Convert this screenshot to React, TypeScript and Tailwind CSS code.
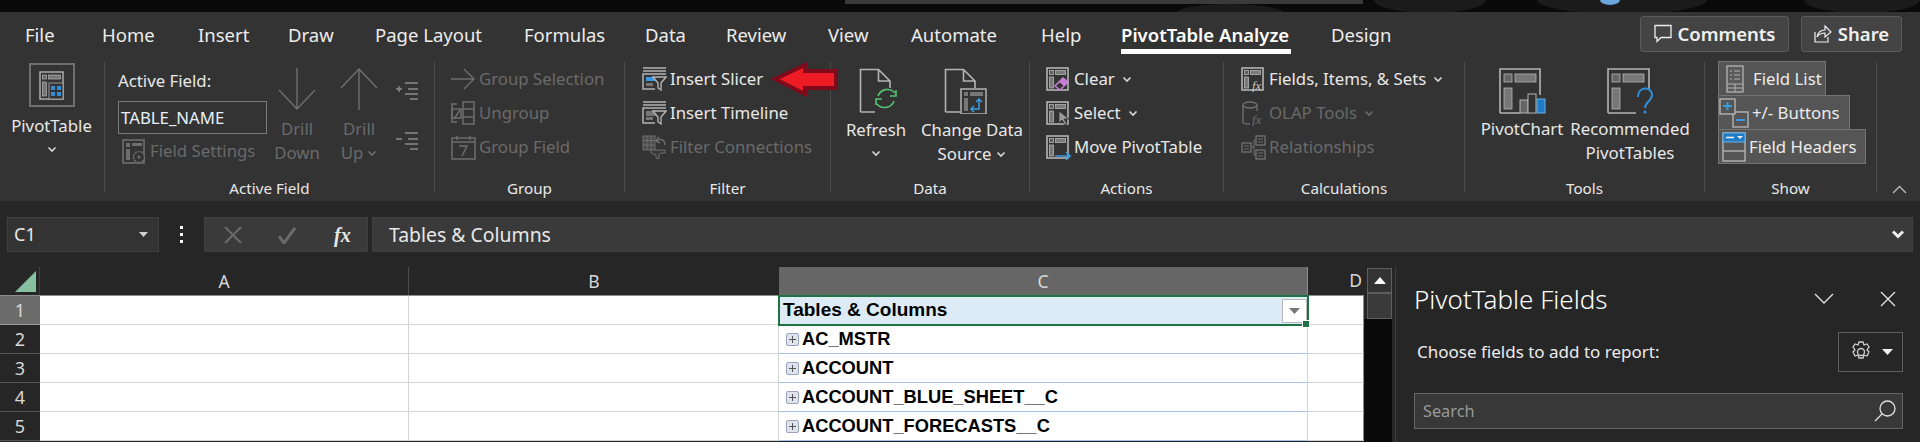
import type { ReactNode } from "react";

const LINE = "#b4b4b4";
const DIM = "#6e6e6e";

const TABS = [
  { label: "File", cls: "w-[77px]" },
  { label: "Home", cls: "w-[96px]" },
  { label: "Insert", cls: "w-[90px]" },
  { label: "Draw", cls: "w-[87px]" },
  { label: "Page Layout", cls: "w-[149px]" },
  { label: "Formulas", cls: "w-[121px]" },
  { label: "Data", cls: "w-[81px]" },
  { label: "Review", cls: "w-[102px]" },
  { label: "View", cls: "w-[83px]" },
  { label: "Automate", cls: "w-[130px]" },
  { label: "Help", cls: "w-[80px]" },
];

const ROWS = ["AC_MSTR", "ACCOUNT", "ACCOUNT_BLUE_SHEET__C", "ACCOUNT_FORECASTS__C"];

function Chevron({ color = "#d8d8d8" }: { color?: string }) {
  return (
    <svg width="10" height="7" viewBox="0 0 10 7" className="inline-block">
      <path d="M1.5 1.5 5 5l3.5-3.5" fill="none" stroke={color} strokeWidth="1.6" />
    </svg>
  );
}

// the little "layout" glyph most of the PivotTable buttons share
function LayoutGlyph({ color = LINE, children }: { color?: string; children?: ReactNode }) {
  return (
    <svg width="25" height="25" viewBox="0 0 25 25" className="shrink-0">
      <rect x="1" y="1" width="21" height="22" fill="none" stroke={color} strokeWidth="1.6" />
      <rect x="3.5" y="3.5" width="4" height="4" fill="#5e5e5e" stroke={color} strokeWidth="0.8" />
      <rect x="9.5" y="3.5" width="10" height="4" fill="#7a7a7a" stroke={color} strokeWidth="0.8" />
      <rect x="3.5" y="10" width="4" height="11" fill="#7a7a7a" stroke={color} strokeWidth="0.8" />
      {children}
    </svg>
  );
}

function FunnelGlyph({ accent }: { accent?: boolean }) {
  return (
    <svg width="25" height="25" viewBox="0 0 25 25" className="shrink-0">
      <path d="M1 1h23M1 4h23" stroke={LINE} strokeWidth="1.5" />
      <path d="M13 22H1V7h23" fill="none" stroke={LINE} strokeWidth="1.5" />
      <rect x="4" y="10" width="10" height={accent ? 4 : 5} fill={accent ? "#3b9ae1" : "#777"} />
      <rect x="4" y="16" width="7" height="3" fill="#777" />
      <path d="M11 10h13l-5 6v7l-3-2v-5z" fill="#333" stroke={LINE} strokeWidth="1.4" />
    </svg>
  );
}

function FilterConnGlyph() {
  return (
    <svg width="25" height="25" viewBox="0 0 25 25" className="shrink-0">
      <rect x="1" y="1" width="12" height="14" fill="#4b4b4b" stroke={DIM} />
      <path d="M5 1v14M9 1v14M1 5.5h12M1 10h12" stroke={DIM} />
      <path d="M14 7c4-5 9-2 9 3" fill="none" stroke={DIM} strokeWidth="1.4" />
      <path d="M17 2l-3 4 4 2" fill="none" stroke={DIM} strokeWidth="1.4" />
      <path d="M9 15h14v3h-4l-2 2v4l-3-1v-3l-5-2z" fill="#3a3a3a" stroke={DIM} />
    </svg>
  );
}

function RibbonRow({
  icon,
  children,
  dim,
}: {
  icon: ReactNode;
  children: ReactNode;
  dim?: boolean;
}) {
  return (
    <div className={`h-[34px] flex items-center gap-[3px] whitespace-nowrap ${dim ? "text-[#6a6a6a]" : "text-[#e8e8e8]"}`}>
      {icon}
      <span>{children}</span>
    </div>
  );
}

function Group({
  label,
  cls,
  children,
}: {
  label?: string;
  cls: string;
  children: ReactNode;
}) {
  return (
    <div className={`${cls} h-[131px] shrink-0 flex flex-col border-r border-[#4b4b4b]`}>
      <div className="flex-1 min-h-0">{children}</div>
      {label && <div className="h-[10px] leading-[10px] text-center text-[15.2px] text-[#e8e8e8]">{label}</div>}
    </div>
  );
}

function DocGlyph({ children }: { children?: ReactNode }) {
  return (
    <svg width="44" height="46" viewBox="0 0 44 46">
      <path d="M1.5 44V1.5h18L31 13v7M19.5 1.5V13H31M1.5 44H16" fill="none" stroke={LINE} strokeWidth="1.6" />
      {children}
    </svg>
  );
}

function ShowButton({ cls, icon, label }: { cls: string; icon: ReactNode; label: string }) {
  return (
    <div className={`${cls} h-[35px] -mb-px flex items-center bg-[#555555] border border-[#737373] whitespace-nowrap text-[#ececec]`}>
      {icon}
      <span>{label}</span>
    </div>
  );
}

function Ribbon() {
  return (
    <div className="h-[189px] bg-[#333333] shrink-0">
      <div className="h-[50px] flex items-start pl-[25px] text-[18.5px] text-[#ececec]">
        {TABS.map((t) => (
          <div key={t.label} className={`${t.cls} h-[42px] pt-[9px] border-b-[5px] border-transparent leading-[28px] whitespace-nowrap`}>
            {t.label}
          </div>
        ))}
        <div className="w-[170px] mr-[40px] h-[42px] pt-[9px] border-b-[5px] border-white leading-[28px] font-semibold text-white whitespace-nowrap">
          PivotTable Analyze
        </div>
        <div className="h-[42px] pt-[9px] leading-[28px] whitespace-nowrap">Design</div>
        <div className="ml-auto mr-[18px] mt-[4px] flex gap-[12px] font-semibold text-[#f0f0f0]">
          <div className="w-[149px] h-[36px] bg-[#444444] border border-[#5a5a5a] rounded-[3px] flex items-center justify-center gap-[6px]">
            <svg width="18" height="20" viewBox="0 0 18 20">
              <path d="M1 1.5h16v12H7l-4 4v-4H1z" fill="none" stroke="#eee" strokeWidth="1.3" />
            </svg>
            Comments
          </div>
          <div className="w-[101px] h-[36px] bg-[#444444] border border-[#5a5a5a] rounded-[3px] flex items-center justify-center gap-[6px]">
            <svg width="18" height="20" viewBox="0 0 18 20">
              <path d="M1 8v10h13v-5M3 13c1-5 4-7 8-7V2l6 6-6 5V9c-3 0-6 1-8 4z" fill="none" stroke="#eee" strokeWidth="1.2" />
            </svg>
            Share
          </div>
        </div>
      </div>

      <div className="flex text-[16.8px] leading-[24px] relative">
        {/* PivotTable */}
        <Group cls="w-[105px]">
          <div className="flex flex-col items-center pt-[1px] pr-[1px]">
            <div className="w-[46px] h-[44px] border-2 border-[#6e6e6e] flex items-center justify-center">
              <svg width="25" height="29" viewBox="0 0 25 29">
                <rect x="1" y="1" width="23" height="27" fill="none" stroke={LINE} strokeWidth="1.4" />
                <rect x="3.5" y="4" width="4" height="4" fill="#666" stroke={LINE} strokeWidth="0.7" />
                <rect x="9.5" y="4" width="12" height="4" fill="#777" stroke={LINE} strokeWidth="0.7" />
                <rect x="3.5" y="11" width="4" height="14" fill="#777" stroke={LINE} strokeWidth="0.7" />
                <rect x="10" y="12" width="14" height="16" fill="#333" stroke={LINE} strokeWidth="0.8" />
                <rect x="12" y="15" width="4" height="4" fill="#2f8fd8" />
                <rect x="18" y="15" width="4" height="4" fill="#2f8fd8" />
                <rect x="12" y="21" width="4" height="4" fill="#2f8fd8" />
                <rect x="18" y="21" width="4" height="4" fill="#2f8fd8" />
              </svg>
            </div>
            <div className="mt-[7px] text-[#e8e8e8]">PivotTable</div>
            <div className="mt-[-2px]"><Chevron /></div>
          </div>
        </Group>

        {/* Active Field */}
        <Group cls="w-[330px]" label="Active Field">
          <div className="flex">
            <div className="w-[162px] pl-[13px] shrink-0">
              <div className="h-[39px] pb-[2px] flex items-center text-[#e8e8e8]">Active Field:</div>
              <div className="h-[33px] border border-[#7a7a7a] pl-[2px] flex items-center text-[#e8f0f8]">TABLE_NAME</div>
              <div className="h-[42px] pl-[4px]">
                <RibbonRow dim icon={
                  <svg width="25" height="25" viewBox="0 0 25 25" className="shrink-0">
                    <rect x="1" y="1" width="21" height="23" fill="none" stroke={DIM} strokeWidth="1.6" />
                    <rect x="4" y="4" width="4" height="4" fill={DIM} />
                    <rect x="10" y="4" width="10" height="3" fill={DIM} />
                    <rect x="4" y="10" width="4" height="11" fill={DIM} />
                    <circle cx="17" cy="18" r="5.5" fill="#333" stroke={DIM} strokeWidth="1.6" strokeDasharray="2 1" />
                    <circle cx="17" cy="18" r="1.6" fill={DIM} />
                  </svg>
                }>Field Settings</RibbonRow>
              </div>
            </div>
            <div className="w-[60px] shrink-0 flex flex-col items-center pt-[6px] text-[#6a6a6a]">
              <svg width="40" height="42" viewBox="0 0 40 42">
                <path d="M20 0v41M2 22l18 19 18-19" fill="none" stroke={DIM} strokeWidth="1.4" />
              </svg>
              <div className="mt-[7px]">Drill</div>
              <div>Down</div>
            </div>
            <div className="w-[64px] shrink-0 flex flex-col items-center pt-[6px] text-[#6a6a6a]">
              <svg width="40" height="42" viewBox="0 0 40 42">
                <path d="M20 42V1M2 20 20 1l18 19" fill="none" stroke={DIM} strokeWidth="1.4" />
              </svg>
              <div className="mt-[7px]">Drill</div>
              <div className="flex items-center gap-[4px]">Up <Chevron color={DIM} /></div>
            </div>
            <div className="ml-[5px] flex flex-col pt-[20px] gap-[32px]">
              <svg width="22" height="18" viewBox="0 0 22 18">
                <path d="M0 7h6M3 4v6M9 1h13M12 7h10M9 12h13M14 17h8" stroke="#8a8a8a" strokeWidth="1.4" />
              </svg>
              <svg width="22" height="18" viewBox="0 0 22 18">
                <path d="M0 7h6M9 1h13M12 7h10M9 12h13M14 17h8" stroke="#8a8a8a" strokeWidth="1.4" />
              </svg>
            </div>
          </div>
        </Group>

        {/* Group */}
        <Group cls="w-[190px]" label="Group">
          <div className="pl-[16px]">
            <RibbonRow dim icon={
              <svg width="25" height="22" viewBox="0 0 25 22" className="shrink-0">
                <path d="M0 11h23M13 1l10 10-10 10" fill="none" stroke={DIM} strokeWidth="1.4" />
              </svg>
            }>Group Selection</RibbonRow>
            <RibbonRow dim icon={
              <svg width="25" height="25" viewBox="0 0 25 25" className="shrink-0">
                <path d="M6 3H1v18h5M3 18l6-9" fill="none" stroke={DIM} strokeWidth="1.5" />
                <rect x="1" y="8" width="9" height="9" fill="none" stroke={DIM} strokeWidth="1.5" />
                <rect x="12" y="1" width="11" height="22" fill="none" stroke={DIM} strokeWidth="1.5" />
                <path d="M12 8h11M12 16h11" stroke={DIM} strokeWidth="1.5" />
              </svg>
            }>Ungroup</RibbonRow>
            <RibbonRow dim icon={
              <svg width="25" height="25" viewBox="0 0 25 25" className="shrink-0">
                <rect x="1" y="3" width="23" height="21" fill="none" stroke={DIM} strokeWidth="1.5" />
                <path d="M1 7h23M6 1v4M19 1v4" stroke={DIM} strokeWidth="1.5" />
                <path d="M8 11h8l-5 10" fill="none" stroke={DIM} strokeWidth="1.5" />
              </svg>
            }>Group Field</RibbonRow>
          </div>
        </Group>

        {/* Filter */}
        <Group cls="w-[206px]" label="Filter">
          <div className="pl-[17px]">
            <RibbonRow icon={<FunnelGlyph accent />}>Insert Slicer</RibbonRow>
            <RibbonRow icon={<FunnelGlyph />}>Insert Timeline</RibbonRow>
            <RibbonRow dim icon={<FilterConnGlyph />}>Filter Connections</RibbonRow>
          </div>
        </Group>

        {/* Data */}
        <Group cls="w-[199px]" label="Data">
          <div className="flex text-[#e8e8e8]">
            <div className="w-[90px] flex flex-col items-center pt-[6px]">
              <div className="pl-[10px]">
                <DocGlyph>
                  <path d="M36 25a10 10 0 0 0-17 3M18 36a10 10 0 0 0 17-3" fill="none" stroke="#55c271" strokeWidth="1.6" />
                  <path d="M31 28h6v-6M23 31h-6v6" fill="none" stroke="#55c271" strokeWidth="1.6" />
                </DocGlyph>
              </div>
              <div className="mt-[4px]">Refresh</div>
              <div className="mt-[-2px]"><Chevron /></div>
            </div>
            <div className="w-[102px] flex flex-col items-center pt-[6px] whitespace-nowrap">
              <div className="pr-[12px]">
                <DocGlyph>
                  <rect x="17" y="21" width="25" height="25" fill="#333" stroke={LINE} strokeWidth="1.5" />
                  <rect x="20" y="24" width="4" height="4" fill="#777" />
                  <rect x="26" y="24" width="13" height="4" fill="#777" />
                  <rect x="20" y="30" width="4" height="13" fill="#777" />
                  <path d="M28 41h7v-10M32 34l3-3 3 3M30 38l-3 3 3 3" fill="none" stroke="#3d9ae0" strokeWidth="1.5" />
                </DocGlyph>
              </div>
              <div className="mt-[4px]">Change Data</div>
              <div className="flex items-center gap-[5px]">Source <Chevron /></div>
            </div>
          </div>
        </Group>

        {/* Actions */}
        <Group cls="w-[194px]" label="Actions">
          <div className="pl-[16px]">
            <RibbonRow icon={
              <LayoutGlyph>
                <path d="M9 19l8-8 5 4-8 8z" fill="#333" stroke="#c77fd6" strokeWidth="1.5" />
                <path d="M13 15l4-4 5 4-4 4z" fill="#c77fd6" />
              </LayoutGlyph>
            }>
              <span className="inline-flex items-center gap-[7px]">Clear <Chevron /></span>
            </RibbonRow>
            <RibbonRow icon={
              <LayoutGlyph>
                <path d="M13 10v12l3-3 3 5 2-1-3-5h5z" fill="#999" stroke="#333" strokeWidth="0.8" />
              </LayoutGlyph>
            }>
              <span className="inline-flex items-center gap-[7px]">Select <Chevron /></span>
            </RibbonRow>
            <RibbonRow icon={
              <LayoutGlyph>
                <path d="M9 21h15M20 17l4 4-4 4" fill="none" stroke="#3d9ae0" strokeWidth="1.6" />
              </LayoutGlyph>
            }>Move PivotTable</RibbonRow>
          </div>
        </Group>

        {/* Calculations */}
        <Group cls="w-[241px]" label="Calculations">
          <div className="pl-[17px]">
            <RibbonRow icon={
              <LayoutGlyph>
                <text x="11" y="23" fontSize="13" fontStyle="italic" fontFamily="Liberation Serif, serif" fill="#c8c8c8">fx</text>
              </LayoutGlyph>
            }>
              <span className="inline-flex items-center gap-[7px]">Fields, Items, &amp; Sets <Chevron /></span>
            </RibbonRow>
            <RibbonRow dim icon={
              <svg width="25" height="25" viewBox="0 0 25 25" className="shrink-0">
                <ellipse cx="9" cy="4" rx="7" ry="3" fill="none" stroke={DIM} strokeWidth="1.4" />
                <path d="M2 4v17c0 1 2 2 7 2M16 4v6" fill="none" stroke={DIM} strokeWidth="1.4" />
                <text x="11" y="23" fontSize="13" fontStyle="italic" fontFamily="Liberation Serif, serif" fill={DIM}>fx</text>
              </svg>
            }>
              <span className="inline-flex items-center gap-[7px]">OLAP Tools <Chevron color={DIM} /></span>
            </RibbonRow>
            <RibbonRow dim icon={
              <svg width="25" height="25" viewBox="0 0 25 25" className="shrink-0">
                <rect x="1" y="8" width="9" height="9" fill="none" stroke={DIM} strokeWidth="1.4" />
                <rect x="15" y="1" width="9" height="9" fill="none" stroke={DIM} strokeWidth="1.4" />
                <rect x="15" y="15" width="9" height="9" fill="none" stroke={DIM} strokeWidth="1.4" />
                <path d="M10 12h3M13 5v15M13 5h2M13 20h2M3 11h5M3 14h5M17 4h5M17 7h5M17 18h5M17 21h5" fill="none" stroke={DIM} />
              </svg>
            }>Relationships</RibbonRow>
          </div>
        </Group>

        {/* Tools */}
        <Group cls="w-[240px]" label="Tools">
          <div className="flex text-[#e8e8e8]">
            <div className="w-[114px] flex flex-col items-center pt-[6px]">
              <svg width="47" height="46" viewBox="0 0 47 46">
                <path d="M1 45V1h40v26M1 45h20" fill="none" stroke={LINE} strokeWidth="1.6" />
                <rect x="5" y="6" width="8" height="8" fill="#666" stroke={LINE} strokeWidth="0.8" />
                <rect x="16" y="6" width="21" height="8" fill="#777" stroke={LINE} strokeWidth="0.8" />
                <rect x="5" y="20" width="8" height="21" fill="#777" stroke={LINE} strokeWidth="0.8" />
                <rect x="21" y="32" width="8" height="13" fill="#666" stroke={LINE} />
                <rect x="29" y="26" width="8" height="19" fill="#333" stroke={LINE} />
                <rect x="38" y="31" width="8" height="14" fill="#1f7cc4" stroke="#6ab0e6" />
              </svg>
              <div className="mt-[3px]">PivotChart</div>
            </div>
            <div className="w-[102px] flex flex-col items-center pt-[6px] whitespace-nowrap">
              <svg width="47" height="46" viewBox="0 0 47 46">
                <path d="M1 45V1h41v20M1 45h28" fill="none" stroke={LINE} strokeWidth="1.6" />
                <rect x="5" y="6" width="8" height="8" fill="#666" stroke={LINE} strokeWidth="0.8" />
                <rect x="16" y="6" width="21" height="8" fill="#777" stroke={LINE} strokeWidth="0.8" />
                <rect x="5" y="20" width="8" height="21" fill="#777" stroke={LINE} strokeWidth="0.8" />
                <path d="M31 29c0-11 14-11 14-2 0 6-7 7-7 13" fill="none" stroke="#2f8fd8" strokeWidth="2" />
                <circle cx="38" cy="44" r="1.6" fill="#2f8fd8" />
              </svg>
              <div className="mt-[3px]">Recommended</div>
              <div>PivotTables</div>
            </div>
          </div>
        </Group>

        {/* Show */}
        <Group cls="w-[172px]" label="Show">
          <div className="pl-[13px] -mt-[1px] flex flex-col items-start">
            <ShowButton cls="w-[108px] pl-[7px] gap-[9px]" icon={
              <svg width="18" height="28" viewBox="0 0 18 28" className="shrink-0">
                <rect x="1" y="1" width="16" height="26" fill="#5a5a5a" stroke={LINE} strokeWidth="1.3" />
                <path d="M4 6h2M8 6h6M4 10h2M8 10h6M4 14h2M8 14h6M1 19h16M1 23h16M9 19v8" stroke={LINE} />
              </svg>
            } label="Field List" />
            <ShowButton cls="w-[132px] gap-[3px]" icon={
              <svg width="30" height="30" viewBox="0 0 30 30" className="shrink-0">
                <rect x="14" y="14" width="15" height="15" fill="#555" stroke={LINE} strokeWidth="1.4" />
                <rect x="1" y="1" width="15" height="15" fill="#555" stroke={LINE} strokeWidth="1.4" />
                <path d="M4 8h9M8.500 4v8" stroke="#3d9ae0" strokeWidth="2" />
                <path d="M17 22h9" stroke="#3d9ae0" strokeWidth="2" />
              </svg>
            } label="+/- Buttons" />
            <ShowButton cls="w-[148px] gap-[3px]" icon={
              <svg width="24" height="30" viewBox="0 0 24 30" className="shrink-0 ml-[3px]">
                <rect x="1" y="1" width="22" height="28" fill="#555" stroke={LINE} strokeWidth="1.4" />
                <rect x="1" y="1" width="22" height="9" fill="#1f7cc4" stroke="#6ab0e6" />
                <path d="M4 5.500h8" stroke="#eee" strokeWidth="1.6" />
                <path d="M15 4h6l-3 3z" fill="#eee" />
                <path d="M1 19h22" stroke={LINE} strokeWidth="1.4" />
              </svg>
            } label="Field Headers" />
          </div>
        </Group>

        <div className="flex-1 flex items-end justify-end pr-[13px]">
          <svg width="15" height="9" viewBox="0 0 15 9" className="-mb-[1px]">
            <path d="M1 8l6.500-6.500L14 8" fill="none" stroke="#bdbdbd" strokeWidth="1.3" />
          </svg>
        </div>

        {/* callout someone drew on the screenshot */}
        <svg width="68" height="35" viewBox="0 0 68 35" className="absolute left-[771px] top-0">
          <path d="M4 17 34 3v6h31v17H34v6z" fill="#ed1c24" stroke="#7f0a1c" strokeWidth="4" />
        </svg>
      </div>
    </div>
  );
}

function FormulaBar() {
  return (
    <div className="h-[66px] shrink-0 pt-[16px] pl-[7px] pr-[7px] flex gap-[4px] items-start text-[#e8e8e8]">
      <div className="w-[152px] h-[35px] bg-[#333333] border border-[#404040] flex items-center justify-between pl-[6px] pr-[10px] text-[18px]">
        C1
        <svg width="9" height="5" viewBox="0 0 9 5"><path d="M0 0h9L4.500 5z" fill="#d0d0d0" /></svg>
      </div>
      <div className="w-[37px] h-[35px] flex flex-col items-center justify-center gap-[4px] shrink-0">
        <span className="w-[3px] h-[3px] bg-white" />
        <span className="w-[3px] h-[3px] bg-white" />
        <span className="w-[3px] h-[3px] bg-white" />
      </div>
      <div className="w-[164px] h-[35px] bg-[#3a3a3a] border border-[#404040] flex items-center shrink-0">
        <svg width="18" height="18" viewBox="0 0 18 18" className="ml-[19px]">
          <path d="M1 1l16 16M17 1 1 17" stroke="#6a6a6a" strokeWidth="2" />
        </svg>
        <svg width="18" height="18" viewBox="0 0 18 18" className="ml-[36px]">
          <path d="M1 10l5 7L17 2" fill="none" stroke="#6a6a6a" strokeWidth="3" />
        </svg>
        <span className="ml-[38px] font-['Liberation_Serif',serif] italic font-semibold text-[20px]">fx</span>
      </div>
      <div className="flex-1 h-[35px] bg-[#3a3a3a] border border-[#404040] flex items-center justify-between pl-[16px] pr-[8px] text-[19.4px]">
        Tables &amp; Columns
        <svg width="12" height="9" viewBox="0 0 12 9"><path d="M1 1.500 6 6.500l5-5" fill="none" stroke="#f0f0f0" strokeWidth="3" /></svg>
      </div>
    </div>
  );
}

function Sheet() {
  return (
    <div className="w-[1364px] shrink-0">
      <div className="h-[28px] flex text-[#d8d8d8] text-[17.5px]">
        <div className="w-[40px] flex items-end justify-end pr-[3px] pb-[3px] border-r border-[#3e3e3e]">
          <svg width="21" height="21" viewBox="0 0 21 21"><path d="M21 0v21H0z" fill="#86c0a0" /></svg>
        </div>
        <div className="w-[369px] flex items-center justify-center border-r border-[#4e4e4e]">A</div>
        <div className="w-[370px] flex items-center justify-center">B</div>
        <div className="w-[529px] flex items-center justify-center bg-[#666666] border-r border-[#8a8a8a]">C</div>
        <div className="w-[56px] flex items-center justify-end pr-[2px] border-b border-[#262626]">D</div>
      </div>
      <div className="h-[1px] bg-[#8f8f8f]" />
      {[1, 2, 3, 4, 5].map((n) => (
        <div key={n} className="h-[29px] flex">
          <div className={`w-[40px] flex items-center justify-center border-b text-[#d8d8d8] text-[18px] ${n === 1 ? "bg-[#6b6b6b] border-[#9a9a9a]" : "border-[#555555]"}`}>
            {n}
          </div>
          <div className="w-[369px] bg-white border-b border-r border-[#d4d4d4]" />
          <div className="w-[370px] bg-white border-b border-r border-[#d4d4d4]" />
          {n === 1 ? (
            <div className="w-[529px] relative bg-[#ddebf7] outline-2 -outline-offset-1 outline-[#1f7244] flex items-center pl-[4px] font-['Liberation_Sans',sans-serif] font-bold text-[19px] text-black">
              Tables &amp; Columns
              <div className="ml-auto mr-[1px] w-[25px] h-[24px] bg-white border border-[#b8b8b8] flex items-center justify-center">
                <svg width="11" height="6" viewBox="0 0 11 6"><path d="M0 0h11L5.500 6z" fill="#777" /></svg>
              </div>
              <span className="absolute -right-[2px] -bottom-[3px] w-[6px] h-[6px] bg-[#1f7244] border border-white box-content" />
            </div>
          ) : (
            <div className="w-[529px] bg-white border-b border-r border-b-[#a6c3e6] border-r-[#d4d4d4] flex items-center pl-[7px] gap-[3px] font-['Liberation_Sans',sans-serif] font-bold text-[18.3px] text-black whitespace-nowrap">
              <svg width="13" height="13" viewBox="0 0 13 13" className="shrink-0">
                <rect x="0.500" y="0.500" width="12" height="12" rx="1.500" fill="#dfe3ee" stroke="#9aa3bd" />
                <path d="M3 6.500h7M6.500 3v7" stroke="#555" />
              </svg>
              {ROWS[n - 2]}
            </div>
          )}
          <div className="w-[56px] bg-white border-b border-r border-[#d4d4d4] border-r-[#8f8f8f]" />
        </div>
      ))}
    </div>
  );
}

function ScrollBar() {
  return (
    <div className="w-[28px] shrink-0 flex flex-col pl-[3px]">
      <div className="h-[1px]" />
      <div className="h-[25px] bg-[#333333] border border-[#5e5e5e] flex items-center justify-center">
        <svg width="12" height="7" viewBox="0 0 12 7"><path d="M0 7h12L6 0z" fill="#ffffff" /></svg>
      </div>
      <div className="h-[26px] bg-[#3a3a3a] border border-[#5e5e5e]" />
      <div className="flex-1 bg-[#0a0a0a] -ml-[3px]" />
    </div>
  );
}

function FieldsPane() {
  return (
    <div className="flex-1 ml-[3px] border-l border-[#3e3e3e] pl-[18px] pr-[17px] text-[#ececec]">
      <div className="h-[64px] flex items-center justify-between">
        <span className="text-[26px] font-light text-white">PivotTable Fields</span>
        <div className="flex items-center gap-[46px] pr-[7px]">
          <svg width="20" height="12" viewBox="0 0 20 12"><path d="M1 1l9 9 9-9" fill="none" stroke="#e8e8e8" strokeWidth="1.3" /></svg>
          <svg width="16" height="16" viewBox="0 0 16 16"><path d="M1 1l14 14M15 1 1 15" stroke="#e8e8e8" strokeWidth="1.3" /></svg>
        </div>
      </div>
      <div className="mt-[1px] h-[40px] flex items-center justify-between pl-[3px] text-[17px]">
        Choose fields to add to report:
        <div className="w-[65px] h-[40px] border border-[#5e5e5e] flex items-center justify-center gap-[9px]">
          <svg width="24" height="24" viewBox="0 0 24 24" fill="none" stroke="#cfcfcf" strokeWidth="1.300">
            <circle cx="12" cy="12" r="3.500" />
            <path d="M10 2h4l1 3 3-1 2 3-2 3 2 2-2 4-3-1-1 3h-4l-1-3-3 1-2-4 2-2-2-3 2-3 3 1z" />
          </svg>
          <svg width="11" height="6" viewBox="0 0 11 6"><path d="M0 0h11L5.500 6z" fill="#f0f0f0" /></svg>
        </div>
      </div>
      <div className="mt-[21px] h-[36px] bg-[#383838] border border-[#666666] flex items-center justify-between pl-[8px] pr-[5px] text-[16.3px] text-[#9a9a9a]">
        Search
        <svg width="24" height="24" viewBox="0 0 24 24" fill="none" stroke="#e0e0e0" strokeWidth="1.3">
          <circle cx="14.500" cy="9.500" r="7.500" />
          <path d="M9 15l-7 7" />
        </svg>
      </div>
    </div>
  );
}

export default function App() {
  return (
    <div className="w-[1920px] h-[442px] overflow-hidden bg-[#262626] flex flex-col font-['Noto_Sans',sans-serif]">
      <div className="h-[12px] shrink-0 bg-[#0a0a0a] relative overflow-hidden">
        <svg width="1920" height="12" className="absolute left-0 top-0">
          <ellipse cx="1230" cy="14" rx="55" ry="10" fill="#1b1b1b" />
          <ellipse cx="1430" cy="0" rx="56" ry="13" fill="#1b1b1b" />
          <ellipse cx="1622" cy="0" rx="85" ry="14" fill="#1b1b1b" />
          <ellipse cx="1862" cy="0" rx="58" ry="13" fill="#1b1b1b" />
          <ellipse cx="1610" cy="0" rx="10" ry="5" fill="#6aa5dc" />
        </svg>
        <div className="relative ml-[845px] w-[518px] h-[4px] bg-[#3a3a3a]" />
      </div>
      <Ribbon />
      <FormulaBar />
      <div className="flex-1 min-h-0 flex overflow-hidden">
        <Sheet />
        <ScrollBar />
        <FieldsPane />
      </div>
    </div>
  );
}
